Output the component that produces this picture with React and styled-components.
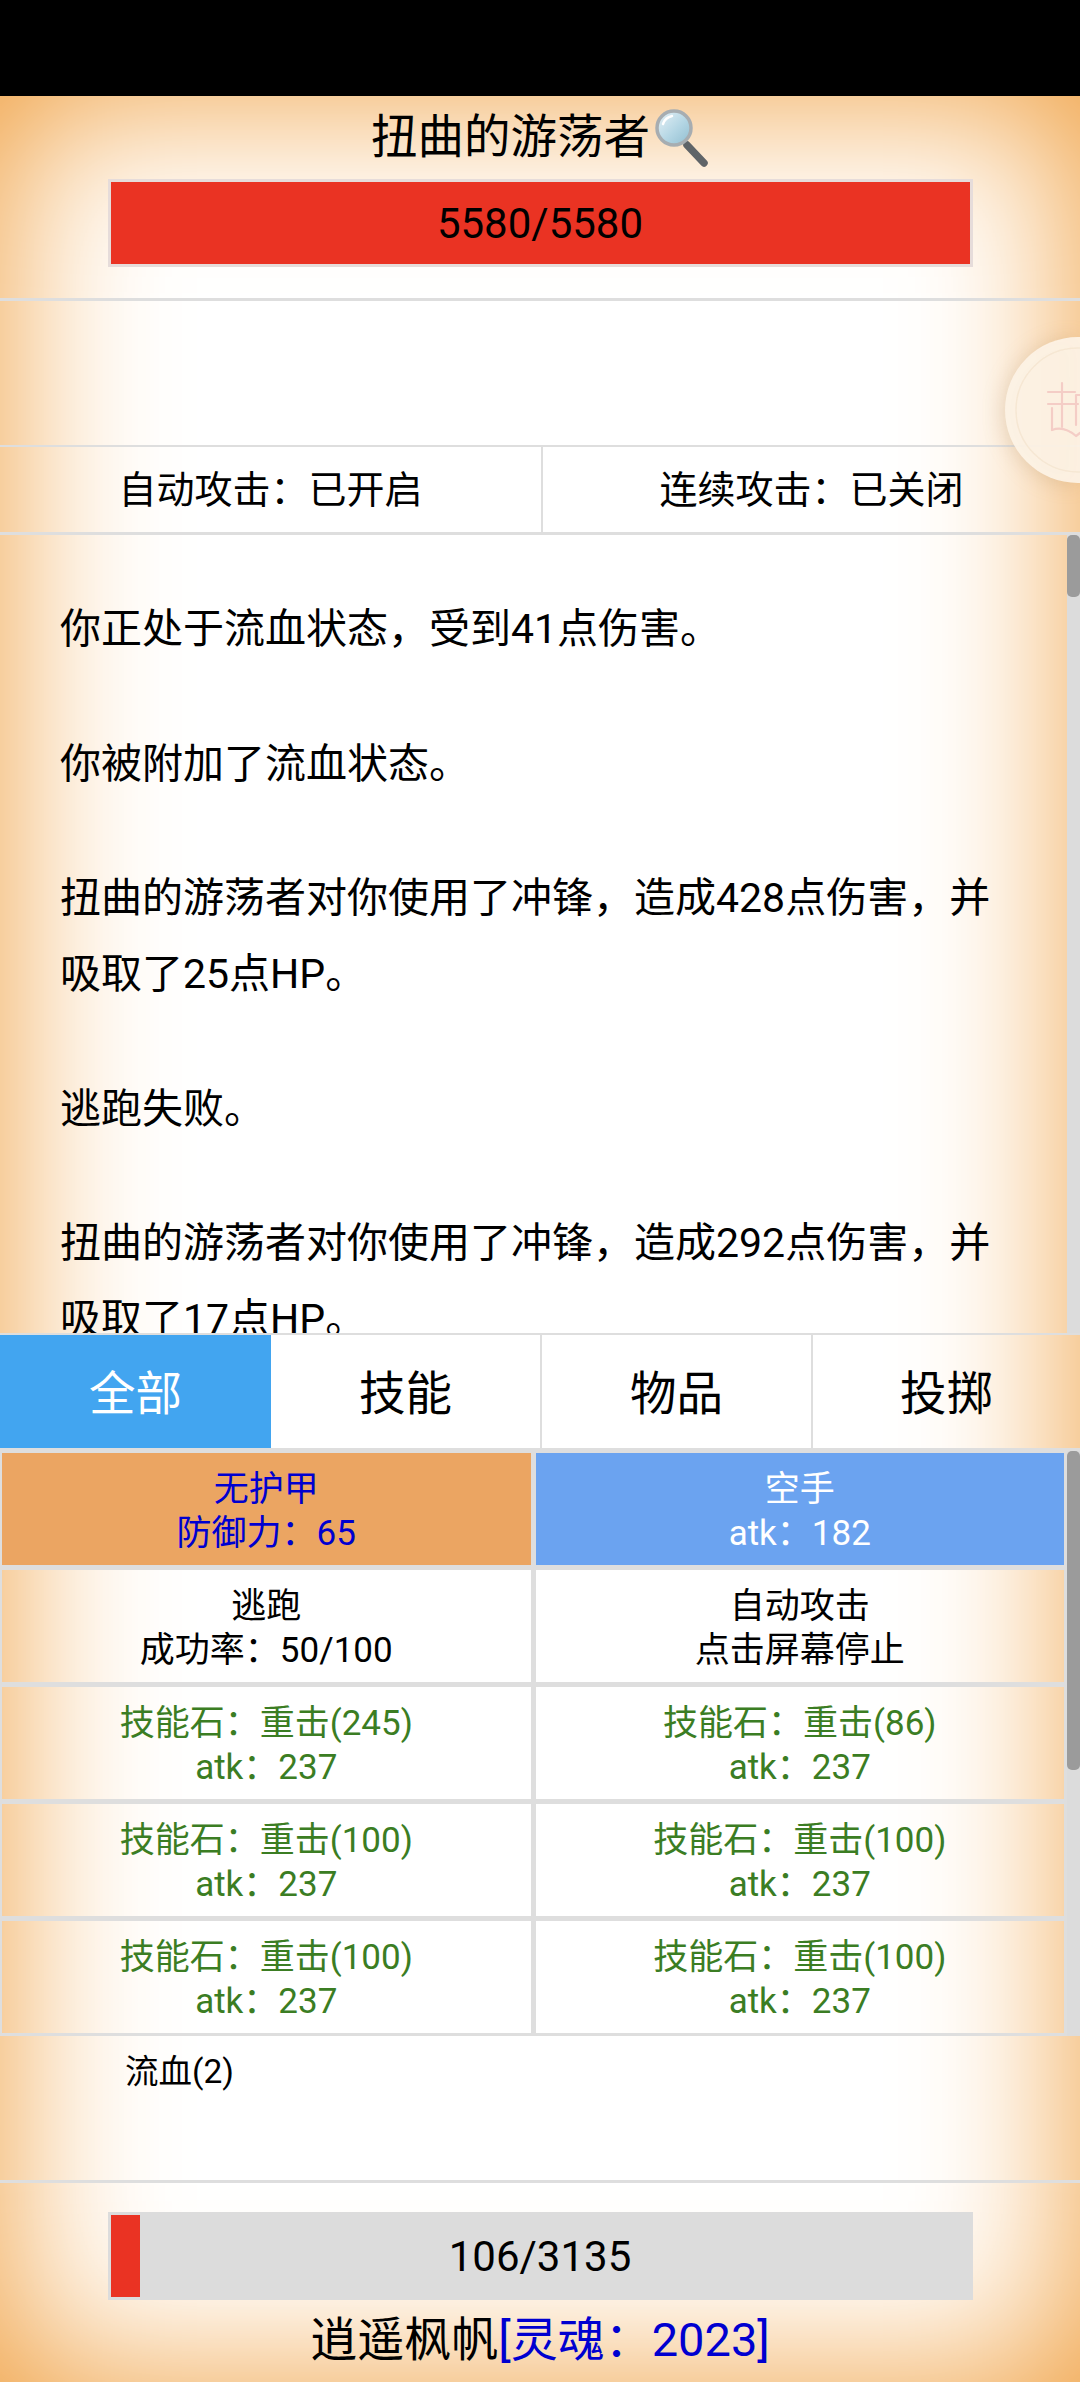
import React from 'react';
import styled, { createGlobalStyle } from 'styled-components';

const GlobalStyle = createGlobalStyle`
  html, body { margin: 0; padding: 0; background: #000; }
  body { font-family: Roboto, "Noto Sans CJK SC", sans-serif; color: #000; }
  * { box-sizing: border-box; }
`;

const Screen = styled.div`
  width: 1080px;
  height: 2382px;
  overflow: hidden;
  position: relative;
  background: #000;
  display: flex;
  flex-direction: column;
`;

const StatusStrip = styled.div`
  height: 96px;
  flex: none;
  background: #000;
`;

const Page = styled.main`
  flex: 1;
  position: relative;
  display: flex;
  flex-direction: column;
  background: #fff;
  box-shadow: inset 0 0 165px #ef9b37;
`;

const Header = styled.header`
  height: 205px;
  flex: none;
  display: flex;
  flex-direction: column;
  align-items: center;
  border-bottom: 3px solid #dedede;
`;

const Title = styled.h1`
  margin: 0;
  height: 83px;
  display: flex;
  align-items: center;
  font-size: 46.5px;
  font-weight: 400;
  line-height: 1;
`;

const HpBar = styled.div`
  position: relative;
  width: 865px;
  height: 88px;
  background: ${(p) => p.$track};
  border: 3px solid ${(p) => p.$edge};
  display: flex;
  align-items: center;
  justify-content: center;
  font-size: 42px;
`;

const HpFill = styled.div`
  position: absolute;
  left: 0;
  top: 0;
  bottom: 0;
  background: #ea3323;
`;

const HpLabel = styled.span`
  position: relative;
`;

const EffectSlot = styled.div`
  height: 144px;
  flex: none;
`;

const ToggleRow = styled.div`
  height: 90px;
  flex: none;
  display: flex;
  border-top: 2px solid #dedede;
  border-bottom: 3px solid #dedede;
`;

const Toggle = styled.div`
  flex: ${(p) => (p.$first ? '0 0 543px' : '1')};
  display: flex;
  align-items: center;
  justify-content: center;
  padding-bottom: 6px;
  font-size: 38px;
  border-right: ${(p) => (p.$first ? '2px solid #dedede' : 'none')};
`;

const Log = styled.section`
  position: relative;
  height: 798px;
  flex: none;
  overflow: hidden;
  padding: 56px 52px 0 60px;
  font-size: 41px;
  line-height: 76px;
`;

const LogLine = styled.p`
  margin: 0 0 58.5px;
`;

const ScrollTrack = styled.div`
  position: absolute;
  right: 0;
  top: 0;
  bottom: 0;
  width: 13px;
  background: #dcdcdc;
`;

const ScrollThumb = styled.div`
  width: 100%;
  height: ${(p) => p.$height}px;
  background: #9b9b9b;
  border-radius: 5px;
`;

const Tabs = styled.nav`
  height: 118px;
  flex: none;
  display: flex;
  border-top: 2px solid #dedede;
  border-bottom: 3px solid #dedede;
`;

const Tab = styled.div`
  flex: ${(p) => (p.$last ? '1' : '0 0 271px')};
  display: flex;
  align-items: center;
  justify-content: center;
  padding-bottom: 5px;
  font-size: 46.5px;
  color: ${(p) => (p.$active ? '#fff' : '#000')};
  background: ${(p) => (p.$active ? '#42a5f0' : 'transparent')};
  border-right: ${(p) => (p.$last || p.$active ? 'none' : '2px solid #dedede')};
`;

const ActionPane = styled.section`
  position: relative;
  height: 585px;
  flex: none;
  padding-right: 13px;
`;

const ActionGrid = styled.div`
  display: grid;
  grid-template-columns: 1fr 1fr;
  grid-auto-rows: 117px;
`;

const Action = styled.div`
  display: flex;
  flex-direction: column;
  align-items: center;
  justify-content: center;
  border-style: solid;
  border-color: #dedede;
  border-width: 2px 3px 3px 2px;
  padding-top: 5px;
  font-size: 35px;
  line-height: 44px;
  color: ${(p) => p.$color};
  background: ${(p) => p.$bg};
`;

const Statuses = styled.div`
  height: 147px;
  flex: none;
  padding: 14px 0 0 125px;
  font-size: 33.5px;
  line-height: 44px;
  border-bottom: 3px solid #dedede;
`;

const Footer = styled.footer`
  flex: 1;
  display: flex;
  flex-direction: column;
  align-items: center;
  padding-top: 29px;
`;

const PlayerName = styled.div`
  margin-top: 12px;
  font-size: 47px;
  line-height: 56px;
`;

const SoulTag = styled.span`
  color: #0000d0;
`;

const FloatingBadge = styled.svg`
  position: absolute;
  left: 1000px;
  top: 236px;
  width: 80px;
  height: 156px;
  filter: drop-shadow(-3px 2px 10px rgba(150, 110, 60, 0.22));
`;

// Magnifier drawn as a small pictogram next to the monster name
const Magnifier = () => (
  <svg width="58" height="62" viewBox="0 0 58 62" style={{ flex: 'none', marginLeft: 1 }}>
    <defs>
      <linearGradient id="lens" x1="0" y1="0" x2="1" y2="1">
        <stop offset="0" stopColor="#e8f2f6" />
        <stop offset="0.55" stopColor="#b4d6e4" />
        <stop offset="1" stopColor="#8fbdd0" />
      </linearGradient>
    </defs>
    <line x1="36" y1="38" x2="53" y2="56" stroke="#5f6468" strokeWidth="7.5" strokeLinecap="round" />
    <circle cx="23" cy="21" r="17" fill="url(#lens)" stroke="#a7adb1" strokeWidth="3.5" />
    <path d="M12 17 a12 12 0 0 1 9 -8" fill="none" stroke="#fff" strokeWidth="2.5" strokeLinecap="round" />
  </svg>
);

// Translucent floating coin, its right part runs off the screen
const SoulBadge = () => (
  <FloatingBadge viewBox="-5 -5 80 156">
    <circle cx="73" cy="73" r="73" fill="#fdf3e6" fillOpacity="0.93" />
    <circle cx="73" cy="73" r="62" fill="none" stroke="#f6e7d3" strokeWidth="1.5" />
    <g fill="none" stroke="#f4cdc6" strokeWidth="2.2" strokeLinecap="round" strokeLinejoin="round">
      <path d="M57 46 V70" />
      <path d="M43 55 H70" />
      <path d="M43 67 H73" />
      <path d="M47 71 V93" />
      <path d="M47 93 C55 90 64 93 71 99 L75 96" />
      <path d="M57 70 V90" />
      <path d="M71 58 H75 M71 58 V88" />
    </g>
  </FloatingBadge>
);

const logLines = [
  '你正处于流血状态，受到41点伤害。',
  '你被附加了流血状态。',
  '扭曲的游荡者对你使用了冲锋，造成428点伤害，并吸取了25点HP。',
  '逃跑失败。',
  '扭曲的游荡者对你使用了冲锋，造成292点伤害，并吸取了17点HP。',
];

const green = '#3b7d23';
const actions = [
  { top: '无护甲', sub: '防御力：65', color: '#0000d0', bg: '#eba562' },
  { top: '空手', sub: 'atk：182', color: '#fff', bg: '#6ba3f0' },
  { top: '逃跑', sub: '成功率：50/100', color: '#000' },
  { top: '自动攻击', sub: '点击屏幕停止', color: '#000' },
  { top: '技能石：重击(245)', sub: 'atk：237', color: green },
  { top: '技能石：重击(86)', sub: 'atk：237', color: green },
  { top: '技能石：重击(100)', sub: 'atk：237', color: green },
  { top: '技能石：重击(100)', sub: 'atk：237', color: green },
  { top: '技能石：重击(100)', sub: 'atk：237', color: green },
  { top: '技能石：重击(100)', sub: 'atk：237', color: green },
];

const tabs = ['全部', '技能', '物品', '投掷'];

export default function App() {
  return (
    <Screen>
      <GlobalStyle />
      <StatusStrip />
      <Page>
        <Header>
          <Title>
            扭曲的游荡者
            <Magnifier />
          </Title>
          <HpBar $track="#ea3323" $edge="#e6dcda">
            <HpLabel>5580/5580</HpLabel>
          </HpBar>
        </Header>
        <EffectSlot />
        <ToggleRow>
          <Toggle $first>自动攻击：已开启</Toggle>
          <Toggle>连续攻击：已关闭</Toggle>
        </ToggleRow>
        <Log>
          {logLines.map((line) => (
            <LogLine key={line}>{line}</LogLine>
          ))}
          <ScrollTrack>
            <ScrollThumb $height={62} />
          </ScrollTrack>
        </Log>
        <Tabs>
          {tabs.map((tab, i) => (
            <Tab key={tab} $active={i === 0} $last={i === tabs.length - 1}>
              {tab}
            </Tab>
          ))}
        </Tabs>
        <ActionPane>
          <ActionGrid>
            {actions.map((a, i) => (
              <Action key={i} $color={a.color} $bg={a.bg}>
                <span>{a.top}</span>
                <span>{a.sub}</span>
              </Action>
            ))}
          </ActionGrid>
          <ScrollTrack>
            <ScrollThumb $height={319} />
          </ScrollTrack>
        </ActionPane>
        <Statuses>流血(2)</Statuses>
        <Footer>
          <HpBar $track="#dcdcdc" $edge="#dcdcdc">
            <HpFill style={{ width: `${(106 / 3135) * 859}px` }} />
            <HpLabel>106/3135</HpLabel>
          </HpBar>
          <PlayerName>
            逍遥枫帆<SoulTag>[灵魂：2023]</SoulTag>
          </PlayerName>
        </Footer>
        <SoulBadge />
      </Page>
    </Screen>
  );
}
